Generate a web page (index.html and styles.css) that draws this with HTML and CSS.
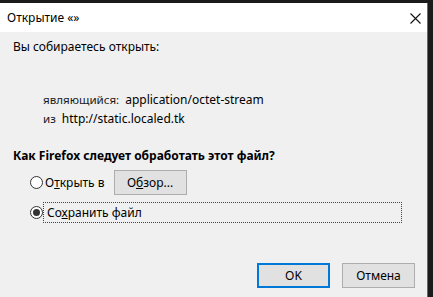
FILE: index.html
```html
<!DOCTYPE html>
<html lang="ru">
<head>
  <meta charset="UTF-8" />
  <title>Открытие «»</title>
  <link rel="stylesheet" href="styles.css">
</head>
<body>
  <div class="frame">
    <div class="window">
      <!-- Title bar -->
      <div class="titlebar">
        <span class="title">Открытие «»</span>
        <svg class="close" width="11" height="11" viewBox="0 0 11 11">
          <path d="M0.5 0.5 L10.5 10.5 M10.5 0.5 L0.5 10.5" stroke="#111" stroke-width="1.1" fill="none"/>
        </svg>
      </div>

      <!-- Dialog body -->
      <div class="content">
        <div class="intro">Вы собираетесь открыть:</div>

        <div class="info">
          <div class="info-row">
            <span class="info-label">являющийся:</span>
            <span class="info-value">application/octet-stream</span>
          </div>
          <div class="info-row">
            <span class="info-label">из</span>
            <span class="info-value">http://static.localed.tk</span>
          </div>
        </div>

        <div class="question">Как Firefox следует обработать этот файл?</div>

        <div class="choices">
          <div class="choice">
            <span class="radio"></span>
            <span class="choice-text">О<u>т</u>крыть в</span>
            <button class="button browse">О<u>б</u>зор...</button>
          </div>
          <div class="choice focused">
            <span class="radio checked"></span>
            <span class="choice-text">Со<u>х</u>ранить файл</span>
          </div>
        </div>

        <div class="actions">
          <button class="button default">OK</button>
          <button class="button">Отмена</button>
        </div>
      </div>
    </div>
  </div>
</body>
</html>
```

FILE: styles.css
```css
* {
  box-sizing: border-box;
  margin: 0;
  padding: 0;
}
html, body {
  width: 100%;
  height: 100%;
  overflow: hidden;
}
body {
  font-family: "Noto Sans", "Open Sans", sans-serif;
  font-size: 12px;
  color: #000;
  background: #1b1b1b;
}
.frame {
  width: 433px;
  height: 297px;
  padding: 3px 5px 0 0;
  background: #1b1b1b;
}
.window {
  width: 428px;
  height: 294px;
  display: flex;
  flex-direction: column;
  background: #f0f0f0;
  border-right: 1px solid #6b6b6b;
}
.titlebar {
  height: 29px;
  flex-shrink: 0;
  background: #fff;
  display: flex;
  align-items: center;
  justify-content: space-between;
  padding: 0 6px 0 7px;
}
.title {
  line-height: 16px;
  padding-top: 1px;
}
.close {
  display: block;
  margin-top: 1px;
}
.content {
  flex: 1;
  display: flex;
  flex-direction: column;
  padding: 7px 12px 0 13px;
  line-height: 16px;
}
.info {
  margin: 37px 0 0 30px;
  display: flex;
  flex-direction: column;
  gap: 3px;
}
.info-row {
  display: flex;
  gap: 6px;
}
.info-label {
  font-size: 11.6px;
  color: #1a1a1a;
}
.question {
  font-weight: bold;
  margin-top: 21px;
}
.choices {
  margin: 6px 0 0 17px;
  display: flex;
  flex-direction: column;
  gap: 8px;
}
.choice {
  display: flex;
  align-items: center;
  height: 25px;
}
.radio {
  width: 13px;
  height: 13px;
  border: 1px solid #333;
  border-radius: 50%;
  background: #fff;
  flex-shrink: 0;
  display: flex;
  align-items: center;
  justify-content: center;
  margin-right: 2px;
}
.radio.checked::after {
  content: "";
  width: 7px;
  height: 7px;
  border-radius: 50%;
  background: #333;
}
.choice.focused {
  height: 19px;
  width: 357px;
  margin-left: 14px;
  outline: 1px dotted #444;
}
.choice.focused .radio {
  margin-left: -14px;
  margin-right: 1px;
}
.choice.focused .choice-text {
  padding-left: 3px;
}
.button {
  font-family: inherit;
  font-size: 12px;
  width: 73px;
  height: 25px;
  background: #e1e1e1;
  border: 1px solid #adadad;
  color: #000;
}
.browse {
  margin-left: 9px;
}
.button.default {
  border: 2px solid #0078d7;
}
.actions {
  margin-top: auto;
  margin-bottom: 9px;
  display: flex;
  justify-content: flex-end;
  gap: 12px;
}
```
